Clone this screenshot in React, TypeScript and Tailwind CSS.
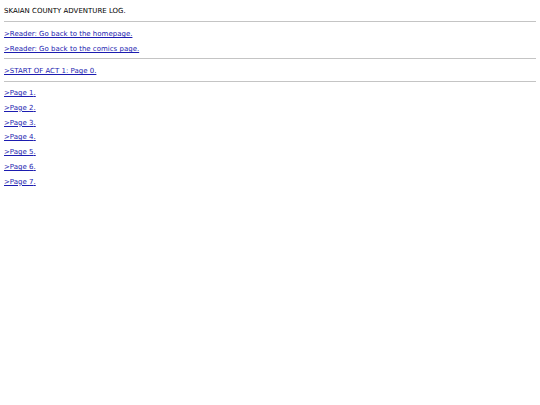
export default function App() {
  const pages = [1, 2, 3, 4, 5, 6, 7];
  const link = "text-[#1c1cb0] underline";
  return (
    <div className="bg-white min-h-[405px] px-[4px] pt-[4px] text-[7px] leading-[15px] text-black" style={{ fontFamily: '"DejaVu Sans", Verdana, sans-serif' }}>
      <div>SKAIAN COUNTY ADVENTURE LOG.</div>
      <div className="h-[1px] bg-[#c4c4c4] mt-[2px] mb-[5px]" />
      <div><a href="#" className={link}>&gt;Reader: Go back to the homepage.</a></div>
      <div><a href="#" className={link}>&gt;Reader: Go back to the comics page.</a></div>
      <div className="h-[1px] bg-[#c4c4c4] mt-[1px] mb-[5px]" />
      <div><a href="#" className={link}>&gt;START OF ACT 1: Page 0.</a></div>
      <div className="h-[1px] bg-[#c4c4c4] mt-[2px] mb-[4px]" />
      <div className="leading-[14.8px]">
        {pages.map((p) => (
          <div key={p}><a href={"#" + p} className={link}>&gt;Page {p}.</a></div>
        ))}
      </div>
    </div>
  );
}
